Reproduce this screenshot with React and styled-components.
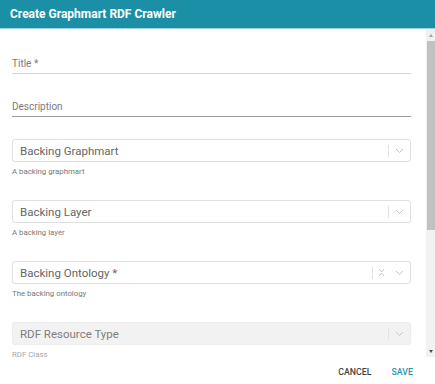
import React from 'react';
import styled, { createGlobalStyle } from 'styled-components';

const GlobalStyle = createGlobalStyle`
  html, body {
    margin: 0;
    padding: 0;
    background: #fff;
    font-family: Roboto, "Liberation Sans", sans-serif;
  }
`

const Dialog = styled.div`
  width: 435px;
  height: 384px;
  display: flex;
  flex-direction: column;
  background: #fff;
  overflow: hidden;
`

const Header = styled.div`
  height: 28px;
  flex: none;
  display: flex;
  align-items: center;
  padding-left: 10px;
  background: #1b8fa5;
  border-bottom: 1px solid #9fd3dc;
  color: #fff;
  font-size: 12px;
  font-weight: 700;
`

const Body = styled.div`
  height: 328px;
  flex: none;
  display: flex;
`

const Content = styled.div`
  flex: 1;
  overflow: hidden;
  padding: 24px 15px 0 12px;
`

const Scrollbar = styled.div`
  width: 9px;
  flex: none;
  display: flex;
  flex-direction: column;
  background: #f1f1f1;
`

const Arrow = styled.div`
  height: 12px;
  display: flex;
  align-items: center;
  justify-content: center;
  &::after {
    content: '';
    border-left: 2.5px solid transparent;
    border-right: 2.5px solid transparent;
    ${p => p.$down
      ? 'border-top: 3px solid #505050;'
      : 'border-bottom: 3px solid #a3a3a3;'}
  }
`

const Thumb = styled.div`
  height: 189px;
  margin-left: 1px;
  background: #c1c1c1;
`

const Track = styled.div`
  flex: 1;
`

const TextField = styled.div`
  height: 20px;
  display: flex;
  align-items: center;
  margin-bottom: 22px;
  border-bottom: 1px solid ${p => p.$strong ? '#9a9a9a' : '#d4d4d4'};
  color: #7a7a7a;
  font-size: 10px;
`

const SelectGroup = styled.div`
  margin-bottom: 23px;
  &:first-of-type {
    margin-top: 1px;
  }
`

const SelectBox = styled.div`
  height: 21px;
  display: flex;
  align-items: center;
  padding-left: 7px;
  border: 1px solid ${p => p.$disabled ? '#ededed' : '#e0e0e0'};
  border-radius: 3px;
  background: ${p => p.$disabled ? '#f2f2f2' : '#fff'};
  box-shadow: 0 0 1px rgba(0, 0, 0, 0.04);
`

const SelectText = styled.div`
  flex: 1;
  color: ${p => p.$disabled ? '#7d7d7d' : '#666'};
  font-size: 11.5px;
`

const Indicators = styled.div`
  display: flex;
  align-items: center;
  height: 100%;
`

const Separator = styled.div`
  width: 1px;
  height: 12px;
  background: #e2e2e2;
`

const IconSlot = styled.div`
  width: ${p => p.$w || 21}px;
  display: flex;
  align-items: center;
  justify-content: center;
`

const Helper = styled.div`
  margin-top: 4px;
  height: 11px;
  line-height: 11px;
  font-size: 7.8px;
  color: ${p => p.$disabled ? '#a8a8a8' : '#777'};
`

const Footer = styled.div`
  flex: 1;
  display: flex;
  align-items: center;
  justify-content: flex-end;
  gap: 20px;
  padding: 2px 22px 0 0;
`

const FlatButton = styled.div`
  font-size: 8.8px;
  font-weight: 500;
  color: ${p => p.$primary ? '#2b95ad' : '#444'};
`

const Chevron = () => (
  <svg width="9" height="6" viewBox="0 0 9 6">
    <path d="M1 1 L4.5 4.5 L8 1" fill="none" stroke="#c4c4c4" strokeWidth="1" />
  </svg>
)

const Clear = () => (
  <svg width="7" height="9" viewBox="0 0 7 9">
    <path d="M1 1 L3.5 4 L6 1 M1 8 L3.5 5 L6 8" fill="none" stroke="#c8c8c8" strokeWidth="1" />
  </svg>
)

function Select({ label, helper, clearable, disabled }) {
  return (
    <SelectGroup>
      <SelectBox $disabled={disabled}>
        <SelectText $disabled={disabled}>{label}</SelectText>
        <Indicators>
          {clearable && <Separator />}
          {clearable && <IconSlot $w={16}><Clear /></IconSlot>}
          {!clearable && <Separator />}
          <IconSlot><Chevron /></IconSlot>
        </Indicators>
      </SelectBox>
      <Helper $disabled={disabled}>{helper}</Helper>
    </SelectGroup>
  )
}

export default function App() {
  return (
    <Dialog>
      <GlobalStyle />
      <Header>Create Graphmart RDF Crawler</Header>
      <Body>
        <Content>
          <TextField>Title *</TextField>
          <TextField $strong>Description</TextField>
          <Select label="Backing Graphmart" helper="A backing graphmart" />
          <Select label="Backing Layer" helper="A backing layer" />
          <Select label="Backing Ontology *" helper="The backing ontology" clearable />
          <Select label="RDF Resource Type" helper="RDF Class" disabled />
        </Content>
        <Scrollbar>
          <Arrow />
          <Thumb />
          <Track />
          <Arrow $down />
        </Scrollbar>
      </Body>
      <Footer>
        <FlatButton>CANCEL</FlatButton>
        <FlatButton $primary>SAVE</FlatButton>
      </Footer>
    </Dialog>
  )
}
